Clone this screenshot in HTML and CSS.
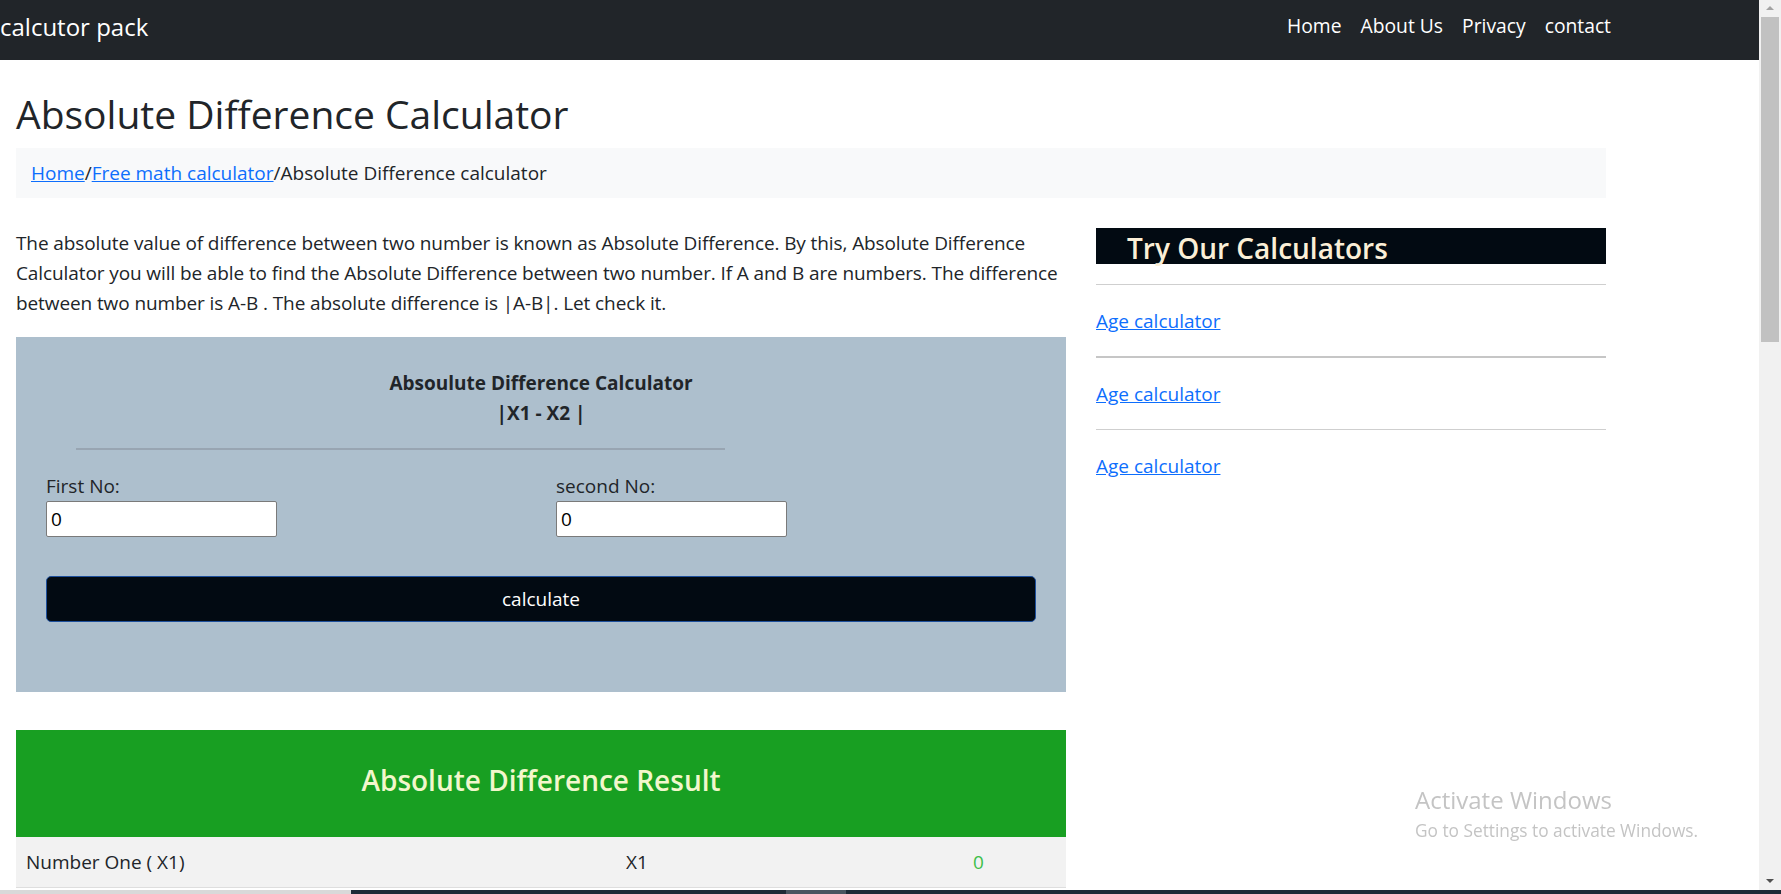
FILE: index.html
```html
<!DOCTYPE html>
<html lang="en">
<head>
<meta charset="utf-8">
<title>Absolute Difference Calculator</title>
<link rel="stylesheet" href="styles.css">
</head>
<body>
<header class="navbar">
  <div class="navbar-inner">
    <a class="brand" href="#">calcutor pack</a>
    <ul class="nav-links">
      <li><a href="#">Home</a></li>
      <li><a href="#">About Us</a></li>
      <li><a href="#">Privacy</a></li>
      <li><a href="#">contact</a></li>
    </ul>
  </div>
</header>

<main class="container">
  <h1 class="page-title">Absolute Difference Calculator</h1>
  <nav class="breadcrumb"><a href="#">Home</a>/<a href="#">Free math calculator</a>/Absolute Difference calculator</nav>

  <div class="row">
    <section class="main-col">
      <p class="intro">The absolute value of difference between two number is known as Absolute Difference. By this, Absolute Difference Calculator you will be able to find the Absolute Difference between two number. If A and B are numbers. The difference between two number is A-B . The absolute difference is |A-B|. Let check it.</p>

      <div class="calc-box">
        <div class="calc-title">Absoulute Difference Calculator<br>|X1 - X2 |</div>
        <hr class="calc-rule">
        <div class="fields">
          <label class="field">First No:<input type="text" value="0"></label>
          <label class="field">second No:<input type="text" value="0"></label>
        </div>
        <button class="calc-btn" type="button">calculate</button>
      </div>

      <div class="result">
        <h2 class="result-title">Absolute Difference Result</h2>
        <div class="result-row">
          <span>Number One ( X1)</span>
          <span>X1</span>
          <span class="num">0</span>
        </div>
      </div>
    </section>

    <aside class="side-col">
      <h3 class="side-title">Try Our Calculators</h3>
      <hr class="side-rule">
      <p class="side-link"><a href="#">Age calculator</a></p>
      <hr class="side-rule thick">
      <p class="side-link"><a href="#">Age calculator</a></p>
      <hr class="side-rule">
      <p class="side-link"><a href="#">Age calculator</a></p>
    </aside>
  </div>
</main>

<div class="win-watermark">
  <div class="wm-title">Activate Windows</div>
  <div class="wm-sub">Go to Settings to activate Windows.</div>
</div>

<div class="fake-scrollbar">
  <div class="sb-arrow up"></div>
  <div class="sb-thumb"></div>
  <div class="sb-track"></div>
  <div class="sb-arrow down"></div>
</div>

<div class="taskbar-edge">
  <div class="tb-light"></div>
  <div class="tb-dark"><div class="tb-spot"></div></div>
</div>
</body>
</html>
```

FILE: styles.css
```css
html {
  overflow: hidden;
}

body {
  margin: 0;
  font-family: "Open Sans", "Noto Sans", sans-serif;
  font-size: 19px;
  line-height: 30px;
  color: #212529;
  background: #fff;
}

a {
  color: #0d6efd;
}

/* navbar */
.navbar {
  background: #212529;
  height: 60px;
}

.navbar-inner {
  width: 1611px;
  height: 60px;
  display: flex;
  align-items: center;
  justify-content: space-between;
}

.brand {
  color: #fff;
  text-decoration: none;
  font-size: 24px;
  line-height: 30px;
  margin-top: -7px;
}

.nav-links {
  list-style: none;
  margin: -8px 0 0;
  padding: 0;
  display: flex;
  gap: 19px;
}

.nav-links a {
  color: #fff;
  text-decoration: none;
  font-size: 19.3px;
}

/* container */
.container {
  width: 1590px;
  margin-left: 16px;
}

.page-title {
  font-size: 39px;
  font-weight: 500;
  letter-spacing: 0;
  line-height: 50px;
  margin: 29px 0 9px;
}

.breadcrumb {
  background: #f8f9fa;
  height: 50px;
  line-height: 50px;
  padding: 0 15px;
}

.row {
  display: flex;
  gap: 30px;
  margin-top: 30px;
}

.main-col {
  width: 1050px;
  flex: none;
}

.side-col {
  width: 510px;
  flex: none;
}

.intro {
  margin: 0 0 19px;
  letter-spacing: -0.1px;
}

/* calculator */
.calc-box {
  background: #adbfcd;
  padding: 31px 30px 70px;
}

.calc-title {
  text-align: center;
  font-weight: 700;
  line-height: 30px;
}

.calc-rule {
  border: 0;
  height: 2px;
  background: #98a5b2;
  width: 649px;
  margin: 20px 0 21px 30px;
}

.fields {
  display: grid;
  grid-template-columns: 1fr 1fr;
  gap: 30px;
}

.field {
  display: flex;
  flex-direction: column;
  align-items: flex-start;
}

.field input {
  width: 231px;
  height: 36px;
  box-sizing: border-box;
  border: 1px solid #7a7a7a;
  border-radius: 2px;
  padding: 0 4px;
  font: inherit;
  color: #000;
  background: #fff;
}

.calc-btn {
  display: block;
  width: 100%;
  height: 46px;
  margin-top: 39px;
  background: #020a12;
  border: 1px solid #1d4f9c;
  border-radius: 5px;
  color: #fff;
  font: inherit;
}

/* result */
.result {
  margin-top: 38px;
}

.result-title {
  margin: 0;
  height: 107px;
  background: #189f22;
  color: #f2f7cc;
  font-size: 28px;
  font-weight: 600;
  text-align: center;
  line-height: 100px;
}

.result-row {
  display: grid;
  grid-template-columns: 600px 347px 1fr;
  background: #f2f2f2;
  height: 50px;
  line-height: 50px;
  padding-left: 10px;
  border-bottom: 1px solid #dedede;
}

.result-row .num {
  color: #3fbf4a;
}

/* sidebar */
.side-title {
  margin: 0;
  height: 36px;
  background: #020a12;
  color: #fbefd7;
  font-size: 28px;
  font-weight: 600;
  line-height: 40px;
  padding-left: 31px;
}

.side-rule {
  border: 0;
  height: 1px;
  background: #cfcfcf;
  margin: 20px 0 20px;
}

.side-rule.thick {
  height: 2px;
  background: #c6c6c6;
}

.side-link {
  margin: 0;
  padding-top: 1px;
}

/* windows watermark */
.win-watermark {
  position: fixed;
  left: 1415px;
  top: 786px;
  color: #c4c4c4;
  line-height: 1.2;
}

.wm-title {
  font-size: 24px;
}

.wm-sub {
  font-size: 17.3px;
  margin-top: 6px;
}

/* fake browser scrollbar */
.fake-scrollbar {
  position: fixed;
  top: 0;
  right: 0;
  width: 22px;
  height: 890px;
  background: #f1f1f1;
  display: flex;
  flex-direction: column;
}

.sb-arrow {
  height: 17px;
  flex: none;
  position: relative;
}

.sb-arrow::after {
  content: "";
  position: absolute;
  left: 7px;
  top: 6px;
  border-left: 4px solid transparent;
  border-right: 4px solid transparent;
}

.sb-arrow.up::after {
  border-bottom: 4px solid #a3a3a3;
}

.sb-arrow.down::after {
  border-top: 4px solid #505050;
}

.sb-thumb {
  height: 325px;
  margin: 0 2px;
  background: #c1c1c1;
  flex: none;
}

.sb-track {
  flex: 1;
}

/* taskbar edge */
.taskbar-edge {
  position: fixed;
  left: 0;
  right: 0;
  bottom: 0;
  height: 4px;
  display: flex;
}

.tb-light {
  width: 351px;
  background: #d9d9d9;
}

.tb-dark {
  flex: 1;
  background: #1e2a36;
  position: relative;
}

.tb-spot {
  position: absolute;
  left: 435px;
  width: 60px;
  top: 0;
  bottom: 0;
  background: #4a5560;
}
```
